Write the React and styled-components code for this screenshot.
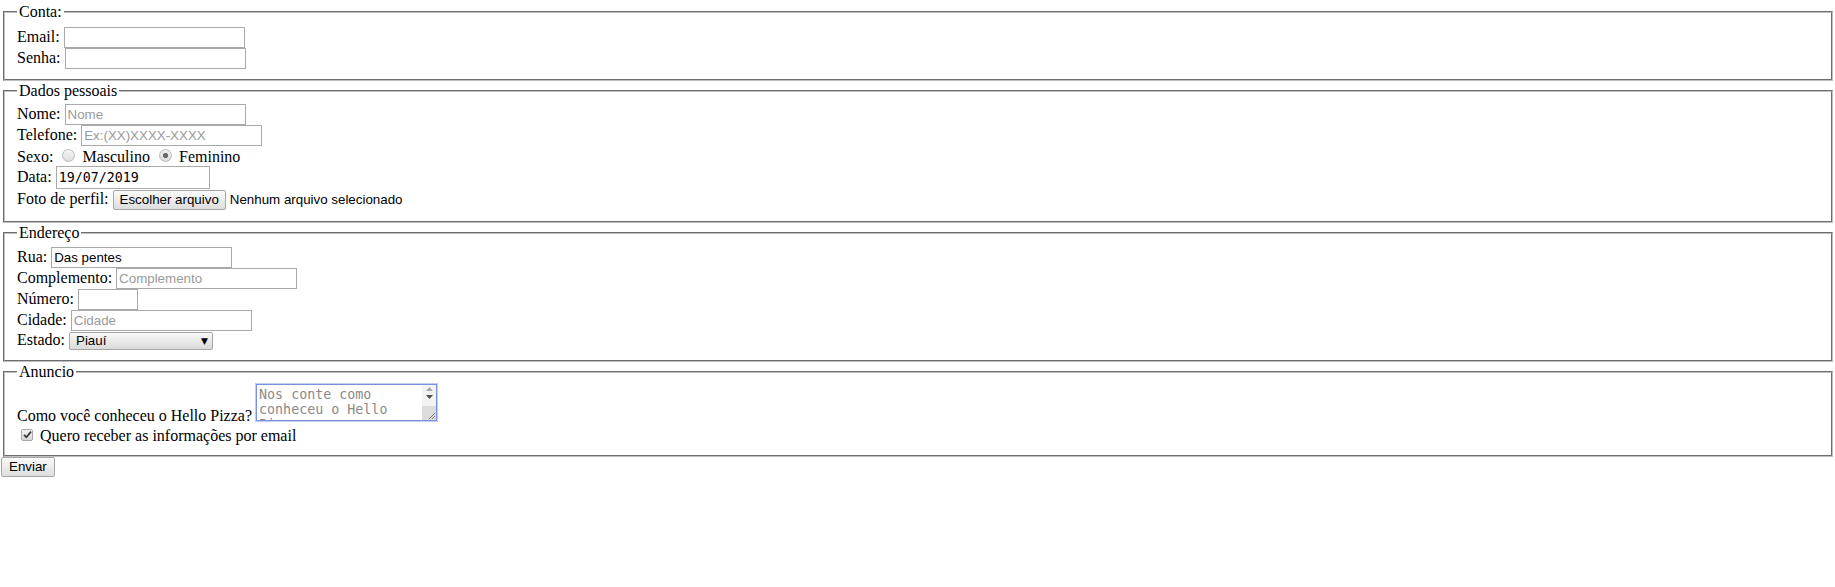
import React from 'react'
import styled, { createGlobalStyle } from 'styled-components'

const GlobalStyle = createGlobalStyle`
  body {
    margin: 0;
    background: #fff;
    color: #000;
    font-family: "Liberation Serif", "Times New Roman", serif;
    font-size: 16px;
  }
`;

const Form = styled.form`
  display: flex;
  flex-direction: column;
  align-items: flex-start;
  gap: 1px;
  padding-top: 3.4px;
`;

const Fieldset = styled.fieldset`
  align-self: stretch;
  min-width: 0;
  margin: 0 2px 0 3px;
  padding: ${p => p.$top ?? 5.6}px 12px ${p => p.$bottom ?? 10}px;
  border: 2px groove rgb(192, 192, 192);
  display: flex;
  flex-direction: column;
  align-items: flex-start;
`;

const Legend = styled.legend`
  padding: 0 2px;
  line-height: 18px;
`;

const Row = styled.div`
  display: flex;
  align-items: ${p => p.$align || 'baseline'};
  gap: 4px;
  min-height: ${p => p.$min || 0}px;
  margin-top: ${p => p.$mt || 0}px;
  line-height: 18px;
`;

const Label = styled.span`
  white-space: nowrap;
`;

const TextInput = styled.input`
  box-sizing: border-box;
  width: ${p => p.$w || 181}px;
  height: ${p => p.$h || 21}px;
  margin: 0;
  padding: 1px 2px;
  border: 1px solid #a9a9a9;
  background: #fff;
  color: #000;
  font-family: ${p => p.$mono ? '"DejaVu Sans Mono", monospace' : '"Liberation Sans", Arial, sans-serif'};
  font-size: 13.333px;
  outline: none;
  &::placeholder {
    color: #9a9a9a;
  }
`;

const Radio = styled.input`
  appearance: none;
  width: 13px;
  height: 13px;
  margin: 3px 3px 0 5px;
  border: 1px solid #b9b9b9;
  border-radius: 50%;
  background: ${p => p.$on
    ? 'radial-gradient(circle, #6a6a6a 0 2.2px, transparent 3px), linear-gradient(#f2f2f2, #dcdcdc)'
    : 'linear-gradient(#f6f6f6, #dedede)'};
`;

const Button = styled.button`
  box-sizing: border-box;
  height: 20px;
  margin: 0;
  padding: 0 ${p => p.$pad || 6}px;
  border: 1px solid #a6a6a6;
  border-radius: 2px;
  background: linear-gradient(#fbfbfb, #dddddd);
  color: #000;
  font-family: "Liberation Sans", Arial, sans-serif;
  font-size: 13.333px;
`;

const FileName = styled.span`
  font-family: "Liberation Sans", Arial, sans-serif;
  font-size: 13.333px;
`;

const SelectWrap = styled.span`
  position: relative;
  display: inline-flex;
  &::after {
    content: "▼";
    position: absolute;
    right: 5px;
    top: 3px;
    font-family: "DejaVu Sans", sans-serif;
    font-size: 9px;
    line-height: 12px;
    pointer-events: none;
  }
`;

const Select = styled.select`
  appearance: none;
  box-sizing: border-box;
  width: 144px;
  height: 18px;
  margin: 0;
  padding: 0 18px 0 6px;
  border: 1px solid #a6a6a6;
  border-radius: 2px;
  background: linear-gradient(#f8f8f8, #dadada);
  color: #000;
  font-family: "Liberation Sans", Arial, sans-serif;
  font-size: 13.333px;
  outline: none;
`;

const AreaWrap = styled.span`
  position: relative;
  display: inline-flex;
  margin-bottom: 4px;
`;

const TextArea = styled.textarea`
  box-sizing: border-box;
  width: 181px;
  height: 37px;
  margin: 0;
  padding: 2px 17px 2px 2px;
  border: 1px solid rgb(120, 145, 225);
  outline: 1px solid rgba(120, 145, 225, 0.45);
  resize: none;
  overflow: hidden;
  font-family: "DejaVu Sans Mono", monospace;
  font-size: 13.333px;
  line-height: 15px;
  &::placeholder {
    color: #8a8a8a;
  }
`;

const ScrollBar = styled.span`
  position: absolute;
  top: 1px;
  right: 1px;
  bottom: 1px;
  width: 14px;
  display: flex;
  flex-direction: column;
  background: #f3f3f3;
`;

const Arrow = styled.span`
  height: 8px;
  display: flex;
  align-items: center;
  justify-content: center;
`;

const Corner = styled.span`
  margin-top: auto;
  height: 14px;
  background: #dcdcdc;
  display: flex;
  align-items: flex-end;
  justify-content: flex-end;
`;

const CheckBox = styled.span`
  box-sizing: border-box;
  width: 12px;
  height: 12px;
  margin: 0 3px 4px 4px;
  border: 1px solid #a9a9a9;
  border-radius: 2px;
  background: linear-gradient(#f2f2f2, #d8d8d8);
  display: inline-flex;
  align-items: center;
  justify-content: center;
`;

const Submit = styled(Button)`
  margin-top: -1px;
  margin-left: 1px;
`;

export default function App() {
  return (
    <>
      <GlobalStyle />
      <Form onSubmit={e => e.preventDefault()}>
        <Fieldset>
          <Legend>Conta:</Legend>
          <Row>
            <Label>Email:</Label>
            <TextInput type="text" />
          </Row>
          <Row>
            <Label>Senha:</Label>
            <TextInput type="password" />
          </Row>
        </Fieldset>

        <Fieldset $top={3.6} $bottom={11}>
          <Legend>Dados pessoais</Legend>
          <Row>
            <Label>Nome:</Label>
            <TextInput placeholder="Nome" />
          </Row>
          <Row>
            <Label>Telefone:</Label>
            <TextInput placeholder="Ex:(XX)XXXX-XXXX" />
          </Row>
          <Row $min={20}>
            <Label>Sexo:</Label>
            <Radio type="radio" name="sexo" readOnly />
            <Label>Masculino</Label>
            <Radio type="radio" name="sexo" $on readOnly />
            <Label>Feminino</Label>
          </Row>
          <Row $min={24}>
            <Label>Data:</Label>
            <TextInput $w={154} $h={23} $mono defaultValue="19/07/2019" />
          </Row>
          <Row>
            <Label>Foto de perfil:</Label>
            <Button type="button">Escolher arquivo</Button>
            <FileName>Nenhum arquivo selecionado</FileName>
          </Row>
        </Fieldset>

        <Fieldset>
          <Legend>Endereço</Legend>
          <Row>
            <Label>Rua:</Label>
            <TextInput defaultValue="Das pentes" />
          </Row>
          <Row>
            <Label>Complemento:</Label>
            <TextInput placeholder="Complemento" />
          </Row>
          <Row>
            <Label>Número:</Label>
            <TextInput $w={60} />
          </Row>
          <Row>
            <Label>Cidade:</Label>
            <TextInput placeholder="Cidade" />
          </Row>
          <Row>
            <Label>Estado:</Label>
            <SelectWrap>
              <Select defaultValue="PI">
                <option value="PI">Piauí</option>
              </Select>
            </SelectWrap>
          </Row>
        </Fieldset>

        <Fieldset $top={3}>
          <Legend>Anuncio</Legend>
          <Row $align="flex-end">
            <Label>Como você conheceu o Hello Pizza?</Label>
            <AreaWrap>
              <TextArea placeholder="Nos conte como conheceu o Hello Pizza" />
              <ScrollBar>
                <Arrow>
                  <svg width="7" height="4" viewBox="0 0 7 4"><path d="M0 4 L3.5 0 L7 4 Z" fill="#a8a8a8" /></svg>
                </Arrow>
                <Arrow>
                  <svg width="7" height="4" viewBox="0 0 7 4"><path d="M0 0 L3.5 4 L7 0 Z" fill="#505050" /></svg>
                </Arrow>
                <Corner>
                  <svg width="8" height="8" viewBox="0 0 8 8">
                    <path d="M7 1 L1 7 M7 4 L4 7" stroke="#777" strokeWidth="1" />
                  </svg>
                </Corner>
              </ScrollBar>
            </AreaWrap>
          </Row>
          <Row $align="flex-end" $mt={2}>
            <CheckBox>
              <svg width="9" height="9" viewBox="0 0 9 9">
                <path d="M1 4.8 L3.4 7.2 L8 1.6" fill="none" stroke="#3a3a3a" strokeWidth="1.8" />
              </svg>
            </CheckBox>
            <Label>Quero receber as informações por email</Label>
          </Row>
        </Fieldset>

        <Submit type="submit" $pad={7}>Enviar</Submit>
      </Form>
    </>
  )
}
